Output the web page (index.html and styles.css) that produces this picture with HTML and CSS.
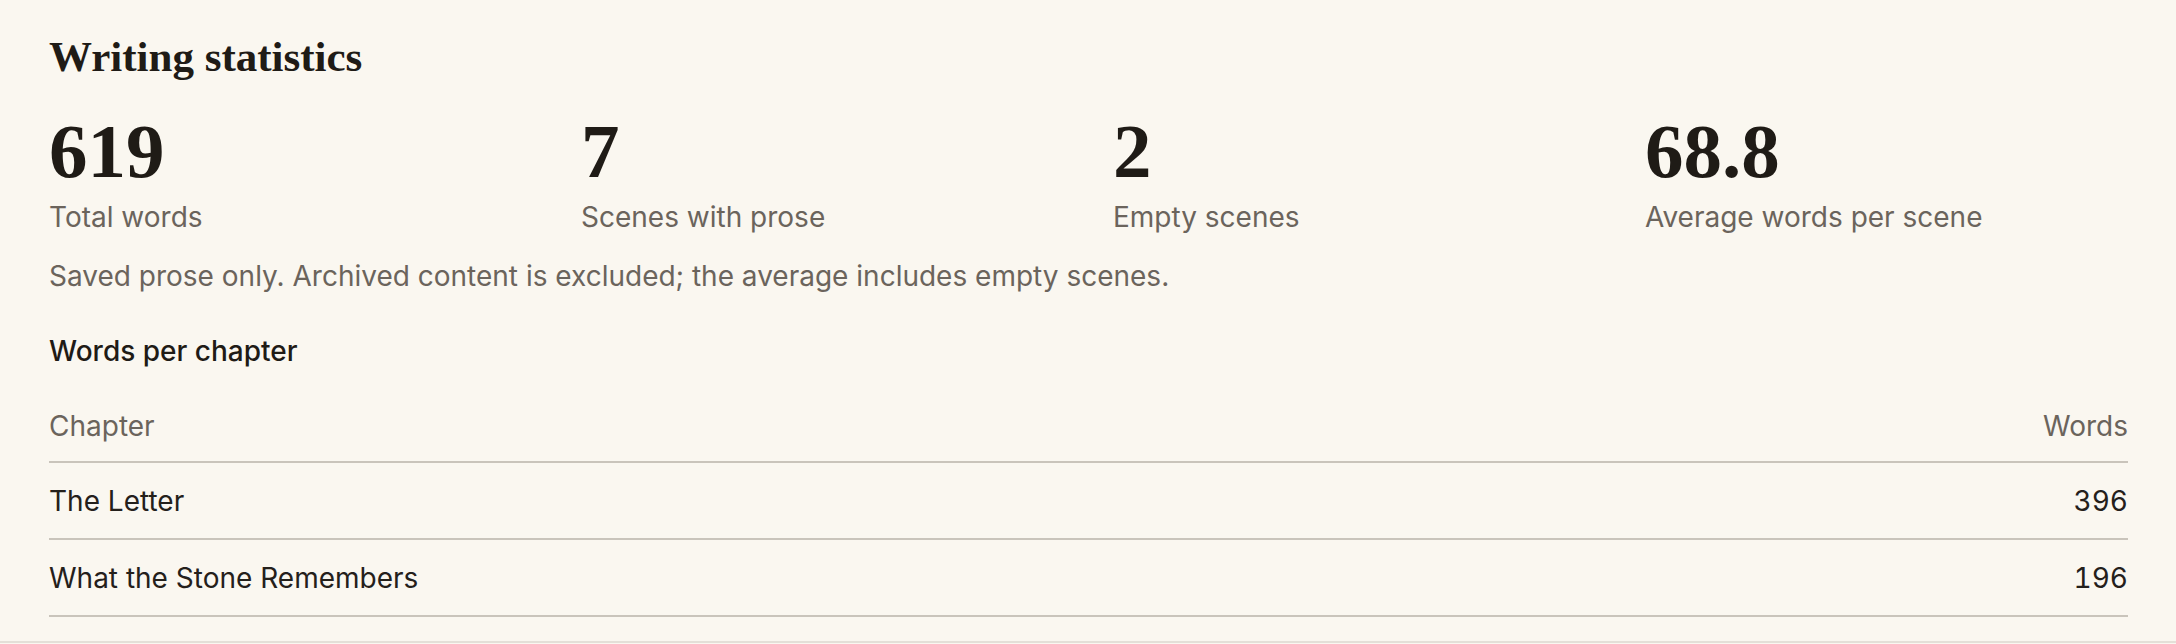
FILE: index.html
```html
<!DOCTYPE html>
<html lang="en">
  <head>
    <meta charset="UTF-8" />
    <meta name="viewport" content="width=device-width, initial-scale=1.0" />
    <title>Writing statistics</title>
    <link rel="stylesheet" href="styles.css">
  </head>
  <body>
    <section class="stats-page">
      <h1 class="stats-title">Writing statistics</h1>

      <div class="stat-grid">
        <div class="stat">
          <div class="stat-value">619</div>
          <div class="stat-label">Total words</div>
        </div>
        <div class="stat">
          <div class="stat-value">7</div>
          <div class="stat-label">Scenes with prose</div>
        </div>
        <div class="stat">
          <div class="stat-value">2</div>
          <div class="stat-label">Empty scenes</div>
        </div>
        <div class="stat">
          <div class="stat-value">68.8</div>
          <div class="stat-label">Average words per scene</div>
        </div>
      </div>

      <p class="stats-note">Saved prose only. Archived content is excluded; the average includes empty scenes.</p>

      <h2 class="section-title">Words per chapter</h2>
      <table class="chapter-table">
        <thead>
          <tr>
            <th>Chapter</th>
            <th class="num">Words</th>
          </tr>
        </thead>
        <tbody>
          <tr>
            <td>The Letter</td>
            <td class="num">396</td>
          </tr>
          <tr>
            <td>What the Stone Remembers</td>
            <td class="num">196</td>
          </tr>
        </tbody>
      </table>
    </section>
  </body>
</html>
```

FILE: styles.css
```css
body {
  margin: 0;
  background-color: #faf7f0;
  color: #221e19;
  font-family: Inter, "Noto Sans", sans-serif;
}
.stats-page {
  padding: 32px 48px 24px 49px;
  border-bottom: 2px solid #e4e0d8;
}
.stats-title {
  margin: 0;
  font-family: "Liberation Serif", serif;
  font-weight: 700;
  font-size: 43px;
  line-height: 50px;
  color: #1f1b16;
}
.stat-grid {
  display: grid;
  grid-template-columns: repeat(4, 1fr);
  column-gap: 49px;
  margin-top: 31px;
}
.stat-value {
  font-family: "Liberation Serif", serif;
  font-weight: 700;
  font-size: 77px;
  line-height: 77px;
  color: #1f1b16;
}
.stat-label {
  margin-top: 8px;
  font-size: 28px;
  line-height: 39px;
  color: #6b645c;
}
.stats-note {
  margin: 20px 0 0;
  font-size: 28px;
  line-height: 39px;
  color: #6b645c;
}
.section-title {
  margin: 36px 0 0;
  font-size: 28px;
  line-height: 39px;
  font-weight: 500;
  color: #1f1b16;
}
.chapter-table {
  width: 100%;
  margin-top: 15px;
  border-collapse: collapse;
  font-size: 28px;
  line-height: 42px;
}
.chapter-table th {
  padding: 19px 0 14px;
  text-align: left;
  font-weight: 400;
  color: #6b645c;
  border-bottom: 2px solid #c9c4bb;
}
.chapter-table td {
  padding: 17px 0 16px;
  color: #24201b;
  border-bottom: 2px solid #c9c4bb;
}
.chapter-table .num {
  text-align: right;
  font-variant-numeric: tabular-nums;
}
```
